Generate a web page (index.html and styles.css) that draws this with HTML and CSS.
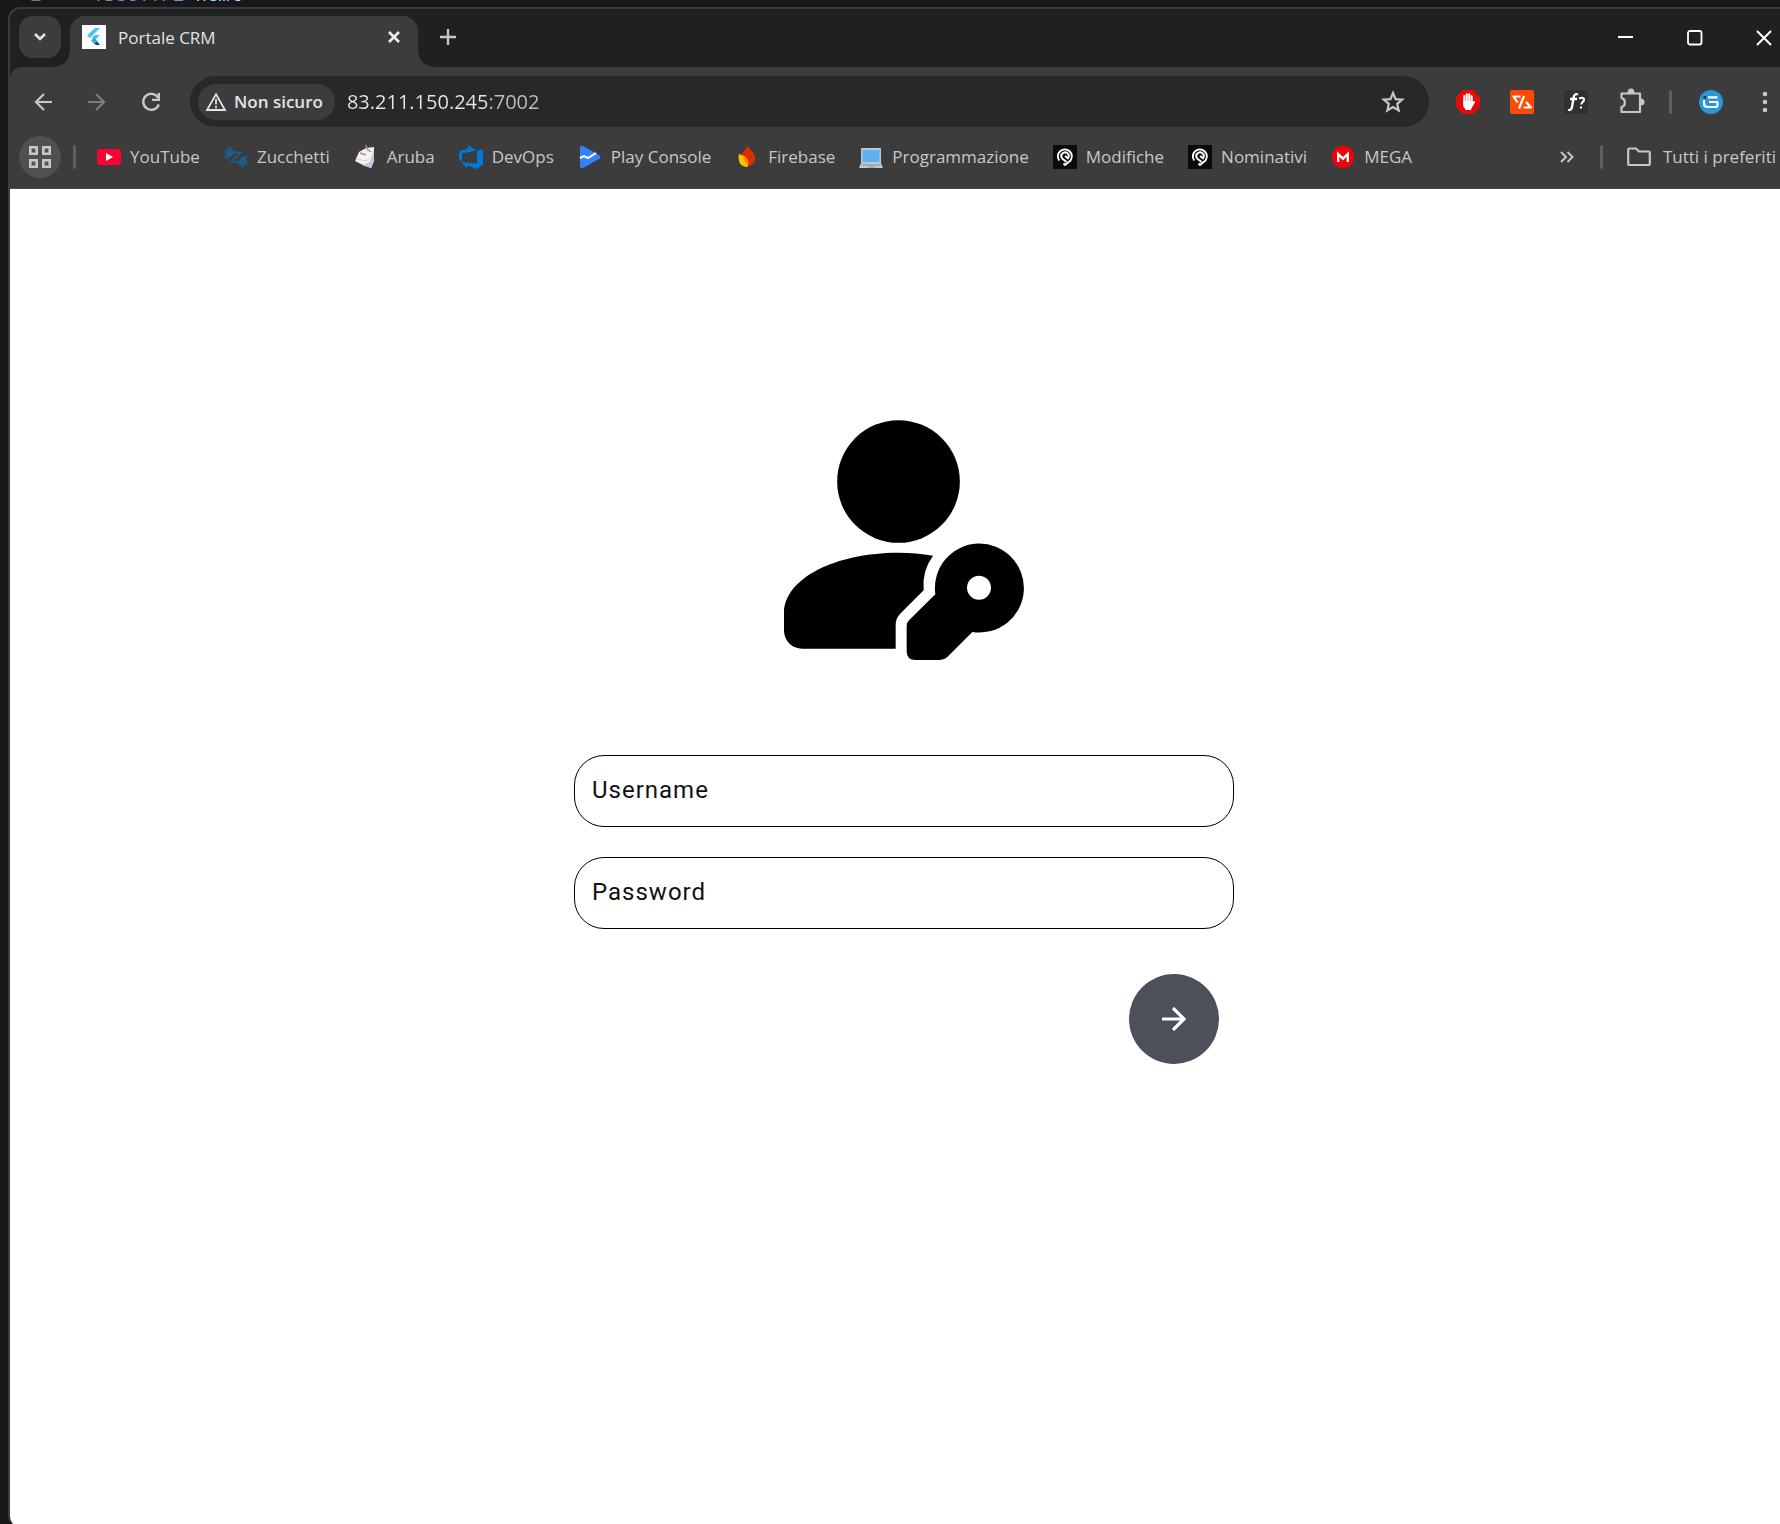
FILE: index.html
```html
<!DOCTYPE html>
<html lang="it">
<head>
<meta charset="utf-8">
<title>Portale CRM</title>
<link rel="stylesheet" href="styles.css">
</head>
<body>
<div class="editor"><span class="line-no">1</span><span class="code"><span class="punct">&lt;!</span><span class="keyword">DOCTYPE</span> <span class="attr">html</span><span class="punct">&gt;</span></span></div>
<div class="window">
  <header class="chrome">
    <div class="tabstrip">
      <button class="tab-search" aria-label="Cerca schede"><svg width="14" height="10" viewBox="0 0 14 10"><path d="M2 2l5 5 5-5" fill="none" stroke="#e3e3e3" stroke-width="2.6"/></svg></button>
      <div class="tab">
        <svg class="icon" viewBox="0 0 24 24"><path fill="#fff" d="M0 0h24v24H0z"/><path fill="#47c5fb" d="M13 3h5L8 13l-3-2.500z"/><path fill="#47c5fb" d="M13 10h5l-5 5-3-2.500z"/><path fill="#35a5ee" d="M9 15.500l3-3 3 3-3 3z"/><path fill="#0b4f9e" d="M12 18.500l3-2.500 3 4h-4z"/></svg>
        <span class="tab-title">Portale CRM</span>
        <button class="tab-close" aria-label="Chiudi scheda"><svg width="14" height="14" viewBox="0 0 14 14"><path d="M2 2l10 10M12 2L2 12" stroke="#eee" stroke-width="2.600"/></svg></button>
      </div>
      <button class="new-tab" aria-label="Nuova scheda"><svg width="16" height="16" viewBox="0 0 16 16"><path d="M8 0v16M0 8h16" stroke="#c7c7c7" stroke-width="2.400"/></svg></button>
      <div class="controls">
        <button class="control" aria-label="Riduci a icona"><svg width="16" height="16" viewBox="0 0 16 16"><path d="M0 7h15" stroke="#fff" stroke-width="2"/></svg></button>
        <button class="control" aria-label="Ingrandisci"><svg width="16" height="16" viewBox="0 0 16 16"><rect x="1" y="1" width="13.500" height="13.500" rx="2" fill="none" stroke="#fff" stroke-width="1.800"/></svg></button>
        <button class="control" aria-label="Chiudi"><svg width="16" height="16" viewBox="0 0 16 16"><path d="M1 1l14 14M15 1L1 15" stroke="#fff" stroke-width="2"/></svg></button>
      </div>
    </div>
    <div class="toolbar">
      <button class="tool" aria-label="Indietro"><svg width="20" height="20" viewBox="0 0 20 20"><path d="M19 10H3M11 2l-8 8 8 8" fill="none" stroke="#c7c7c7" stroke-width="2.200"/></svg></button>
      <button class="tool" aria-label="Avanti"><svg width="20" height="20" viewBox="0 0 20 20"><path d="M1 10h16M9 2l8 8-8 8" fill="none" stroke="#7c7c7c" stroke-width="2.200"/></svg></button>
      <button class="tool" aria-label="Ricarica"><svg width="20" height="20" viewBox="0 0 20 20"><path d="M17 5.500A8 8 0 1 0 17.800 12.500" fill="none" stroke="#c7c7c7" stroke-width="2.400"/><path d="M19 1v8h-8v-2.300h5.700V1z" fill="#c7c7c7"/></svg></button>
      <div class="omnibox">
        <button class="site-info"><svg width="22" height="20" viewBox="0 0 22 20"><path d="M11 2.200L20 18H2z" fill="none" stroke="#e3e3e3" stroke-width="1.800"/><path d="M11 7v5.500M11 14v2.200" stroke="#e3e3e3" stroke-width="1.800"/></svg>Non sicuro</button>
        <input class="address" type="text" aria-label="Indirizzo" value="83.211.150.245:7002">
        <button class="star" aria-label="Aggiungi ai preferiti"><svg width="24" height="24" viewBox="0 0 24 24"><path d="M12 3l2.600 6.100 6.600.6-5 4.300 1.500 6.500-5.700-3.400-5.700 3.400 1.500-6.500-5-4.300 6.600-.6z" fill="none" stroke="#c7c7c7" stroke-width="2.200"/></svg></button>
      </div>
      <button class="tool" aria-label="AdBlock"><svg class="icon" viewBox="0 0 24 24"><path fill="#e60b0b" d="M7 0h10l7 7v10l-7 7H7l-7-7V7z"/><path fill="none" stroke="#fff" stroke-width="2.100" stroke-linecap="round" d="M8.300 13V6M10.800 12V4.200M13.300 12V4.200M15.700 13V6.300M15 17l3-5"/><path fill="#fff" d="M7.200 11h9.600v4l-2 5h-5l-2.600-4z"/></svg></button>
      <button class="tool" aria-label="Estensione codice"><svg class="icon" viewBox="0 0 24 24"><rect width="24" height="24" rx="2" fill="#ff4a07"/><path fill="none" stroke="#fff" stroke-width="2.200" stroke-linejoin="round" d="M10.500 6.500H3.500l4 6M13.500 17.500h7.500l-5-5.500M14 6L9 18.500"/></svg></button>
      <button class="tool" aria-label="WhatFont"><svg class="icon" viewBox="0 0 24 24"><rect width="24" height="24" rx="3" fill="#303030"/><path fill="none" stroke="#fff" stroke-width="2.300" d="M14 4.500c-3-1-4 .5-4.500 3.500L8 17c-.5 3-2 3.500-4 2.700M6 9h7"/><path fill="none" stroke="#fff" stroke-width="2" d="M15.300 9c1-2 5-1.700 4.700 1-.3 2-2.500 2-2.800 4.500M17 16.500v2"/></svg></button>
      <button class="tool" aria-label="Estensioni"><svg width="30" height="30" viewBox="0 0 30 30"><path d="M6.500 6.500H25v18.500H6.500v-5c4.500-1 4.500-8 0-9z" fill="none" stroke="#c7c7c7" stroke-width="2.200" stroke-linejoin="round"/><path fill="#c7c7c7" d="M12.500 6a3.500 4.500 0 0 1 7 0zM25.500 11.500a4 3.500 0 0 1 0 7z"/></svg></button>
      <span class="divider"></span>
      <button class="tool" aria-label="Profilo"><svg class="icon" viewBox="0 0 24 24"><circle cx="12" cy="12" r="12" fill="#2b98d5"/><path fill="none" stroke="#fff" stroke-width="2.200" stroke-linejoin="round" d="M9 7.300h9.500M5 10v3.500q0 3.500 3.500 3.500h8q2 0 2-2v-3H10"/><circle cx="5.800" cy="7.300" r="1.500" fill="#19384c"/></svg></button>
      <button class="tool" aria-label="Menu"><svg width="6" height="22" viewBox="0 0 6 22"><g fill="#c7c7c7"><circle cx="3" cy="3" r="2.300"/><circle cx="3" cy="11" r="2.300"/><circle cx="3" cy="19" r="2.300"/></g></svg></button>
    </div>
    <nav class="bookmarks" aria-label="Preferiti">
      <button class="apps" aria-label="App"><svg width="22" height="22" viewBox="0 0 22 22"><path d="M1.300 1.300h6.400v6.400H1.300zM14.300 1.300h6.400v6.400h-6.400zM1.300 14.300h6.400v6.400H1.300zM14.300 14.300h6.400v6.400h-6.400z" fill="none" stroke="#c7c7c7" stroke-width="2.600"/></svg></button>
      <span class="divider"></span>
      <div class="links">
        <a class="link" href="#"><svg class="icon" viewBox="0 0 24 24"><rect y="4" width="24" height="16" rx="3" fill="#ff0033"/><path fill="#fff" d="M9 8l7 4-7 4z"/></svg>YouTube</a>
        <a class="link" href="#"><svg class="icon" viewBox="0 0 24 24"><path fill="#1b5c88" d="M0 4.500h4.500V.5L11 7l-6 6H0l2-4zM24 19.500h-4.500v4L13 17l6-6h5l-2 4z"/><path fill="none" stroke="#1b5c88" stroke-width="1.800" d="M9 7.300h8L7.500 16.700H16"/></svg>Zucchetti</a>
        <a class="link" href="#"><svg class="icon" viewBox="0 0 24 24"><path fill="#f2f2f8" d="M5 7l7-4 8-1v14l-3 7-8-3-8-4z"/><path fill="#c6c7df" d="M20 4v12l-3 7-9-3 8-3z"/><path fill="none" stroke="#b89268" stroke-width="1.500" d="M12 0l1 4 4 3M6 8l6 2"/><path stroke="#d0d0e0" fill="none" d="M2 14l10 2 7-6"/></svg>Aruba</a>
        <a class="link" href="#"><svg class="icon" viewBox="0 0 24 24"><path fill="#0078d7" d="M24 4.500v15l-6 4.500-10-3.500V24l-5.500-7 15.500 1.500V5.500zM17.500 5.400L9 0v3.500L2 5.600 0 8.300v6.500l3 1.200V8.500z"/></svg>DevOps</a>
        <a class="link" href="#"><svg class="icon" viewBox="0 0 24 24"><path fill="#3182ff" d="M2 3q0-3 3-2l16 9q3 2 0 4L5 23q-3 1-3-2z"/><path fill="none" stroke="#fff" stroke-width="2" d="M2 13l4-2 4 2 8-5"/></svg>Play Console</a>
        <a class="link" href="#"><svg class="icon" viewBox="0 0 24 24"><path fill="#dd2c00" d="M12 1c6 6 9 9 8 14a8.200 8.200 0 0 1-16 0c0-5 5-7 8-14z"/><path fill="#ffc400" d="M4 9c6 2 9 6 8.500 13A8 8 0 0 1 4 16q-1-4 0-7z"/><path fill="#ff9100" d="M8 10c5 3 7 8 4.500 12C11 17 8 15 8 10z"/></svg>Firebase</a>
        <a class="link" href="#"><svg class="icon" viewBox="0 0 24 24"><rect x="2" y="3" width="20" height="16" rx="1" fill="#b5c9d6"/><path fill="#5eb1ec" d="M3.500 5h17v12h-17z"/><path fill="#b9c8d2" d="M2 18h20l2 5H0z"/><path stroke="#82939d" d="M3 20h18M9 22h6"/></svg>Programmazione</a>
        <a class="link" href="#"><svg class="icon" viewBox="0 0 24 24"><path fill="#0a0b0c" d="M0 0h24v24H0z"/><path fill="none" stroke="#fff" stroke-width="1.900" d="M6.200 15.500A7 7 0 1 1 17.500 15.500L12 20l-1.500-1.500M13.500 17L9.200 13.500A3.700 3.700 0 1 1 15 13.300L12 11"/></svg>Modifiche</a>
        <a class="link" href="#"><svg class="icon" viewBox="0 0 24 24"><path fill="#0a0b0c" d="M0 0h24v24H0z"/><path fill="none" stroke="#fff" stroke-width="1.900" d="M6.200 15.500A7 7 0 1 1 17.500 15.500L12 20l-1.500-1.500M13.500 17L9.200 13.500A3.700 3.700 0 1 1 15 13.300L12 11"/></svg>Nominativi</a>
        <a class="link" href="#"><svg class="icon" viewBox="0 0 24 24"><circle cx="12" cy="12" r="11.200" fill="#f0000b"/><path fill="none" stroke="#fff" stroke-width="2.400" d="M7.200 17V9l4.800 4.700L16.800 9v8"/></svg>MEGA</a>
      </div>
      <button class="more" aria-label="Altri preferiti"><svg width="14" height="12" viewBox="0 0 14 12"><path d="M1 1l5 5-5 5M7.500 1l5 5-5 5" fill="none" stroke="#c7c7c7" stroke-width="2"/></svg></button>
      <span class="divider"></span>
      <a class="link all" href="#"><svg class="icon" viewBox="0 0 24 24"><path d="M1.200 19V4.500q0-1 1-1H9l3 3h9.800q1 0 1 1V19q0 1-1 1H2.200q-1 0-1-1z" fill="none" stroke="#c7c7c7" stroke-width="2.200"/></svg>Tutti i preferiti</a>
    </nav>
  </header>
  <main class="page">
    <form class="login">
      <svg class="avatar" viewBox="72 60 720 720" aria-hidden="true">
        <circle cx="415.500" cy="244.500" r="184"/>
        <path d="M72 640C72 534 228 458 415 458Q470 458 519 467Q485 514 491 571L422 640Q407 655 407 675V746H126A54 54 0 0 1 72 692z"/>
        <path fill-rule="evenodd" d="M526 583A133.500 133.500 0 1 1 637 696L562 771Q553 780 540 780H466Q440 780 440 754V678Q440 668 447 661zM693 563.500a36 36 0 1 0-72 0a36 36 0 1 0 72 0z"/>
      </svg>
      <label class="field">Username<input class="entry" type="text" name="username" autocomplete="username"></label>
      <label class="field">Password<input class="entry" type="password" name="password" autocomplete="current-password"></label>
      <button class="submit" type="submit" aria-label="Accedi"><svg width="24" height="24" viewBox="0 0 24 24"><path d="M0 12h22M11 1l11 11-11 11" fill="none" stroke="#fff" stroke-width="3.200"/></svg></button>
    </form>
  </main>
</div>
</body>
</html>
```
FILE: styles.css
```css
* { box-sizing: border-box; }

html { background: #181818; }

body {
  margin: 0;
  min-height: 100vh;
  overflow: hidden;
  display: flex;
  flex-direction: column;
  font-family: "Open Sans", "Noto Sans", sans-serif;
  font-size: 17px;
  color: #c7c7c7;
}

button {
  display: flex;
  align-items: center;
  justify-content: center;
  flex: none;
  padding: 0;
  border: 0;
  background: none;
  color: inherit;
  font: inherit;
}

svg { display: block; flex: none; }

.icon { width: 24px; height: 24px; }

/* Last code line of the editor behind the window */
.editor {
  display: flex;
  align-items: flex-end;
  gap: 40px;
  height: 7px;
  padding-left: 30px;
  font: 19px/22px "Liberation Mono", monospace;
  overflow: hidden;
}
.line-no { color: #6e7681; }
.punct { color: #808080; }
.keyword { color: #569cd6; }
.attr { color: #9cdcfe; }

/* The window runs past the right edge of the desktop */
.window {
  flex: 1;
  display: flex;
  flex-direction: column;
  margin: 0 -18px -2px 8px;
  border: solid #3c3c3c;
  border-width: 2px 0 0 2px;
  border-radius: 12px 0 0 10px;
  background: #1f2120;
  overflow: hidden;
}

.tabstrip {
  display: flex;
  align-items: flex-start;
  height: 58px;
  padding: 7px 0 0 9px;
}
.tab-search {
  width: 42px;
  height: 42px;
  border-radius: 14px;
  background: #3c3c3c;
}
.tab {
  position: relative;
  display: flex;
  align-items: center;
  width: 348px;
  height: 51px;
  margin-left: 9px;
  padding: 0 12px 8px;
  gap: 12px;
  border-radius: 15px 15px 0 0;
  background: #3c3c3c;
  color: #e3e3e3;
}
.tab .icon { margin-top: -2px; }
.tab::before,
.tab::after {
  content: "";
  position: absolute;
  bottom: 0;
  width: 15px;
  height: 15px;
}
.tab::before {
  right: 100%;
  background: radial-gradient(circle at 0 0, transparent 14px, #3c3c3c 15px);
}
.tab::after {
  left: 100%;
  background: radial-gradient(circle at 100% 0, transparent 14px, #3c3c3c 15px);
}
.tab-title { flex: 1; }
.tab-close { width: 24px; height: 24px; margin-top: -2px; }
.new-tab { width: 42px; height: 42px; margin-left: 9px; }
.controls {
  display: flex;
  margin-left: auto;
}
.control { width: 69px; height: 44px; }

.toolbar {
  display: flex;
  align-items: center;
  height: 69px;
  padding: 0 6px;
  border-top-left-radius: 12px;
  background: #3c3c3c;
}
.tool { width: 54px; height: 51px; }
.divider {
  flex: none;
  width: 3px;
  height: 24px;
  margin: 0 12px;
  border-radius: 2px;
  background: #5e5e5e;
}
.omnibox {
  flex: 1;
  display: flex;
  align-items: center;
  height: 51px;
  margin: 0 12px;
  padding: 0 24px 0 8px;
  border-radius: 26px;
  background: #282828;
}
.site-info {
  height: 36px;
  padding: 0 12px 0 7px;
  gap: 7px;
  border-radius: 18px;
  background: #3c3c3c;
  color: #e3e3e3;
  font-weight: 600;
}
.address {
  flex: 1;
  min-width: 0;
  margin-left: 12px;
  padding: 0;
  border: 0;
  outline: 0;
  font: 20px "Open Sans", "Noto Sans", sans-serif;
  color: transparent;
  background: linear-gradient(90deg, #e8e8e8 142px, #c0c0c0 142px);
  background-clip: text;
}

.bookmarks {
  display: flex;
  align-items: center;
  height: 53px;
  padding: 0 22px 11px 9px;
  border-bottom: 1px solid #4a4a4a;
  background: #3c3c3c;
}
.apps {
  width: 42px;
  height: 42px;
  border-radius: 50%;
  background: #505050;
}
.links {
  display: flex;
  flex: 1;
  gap: 24px;
  margin-left: 9px;
}
.link {
  display: flex;
  align-items: center;
  gap: 9px;
  color: inherit;
  text-decoration: none;
  white-space: nowrap;
}
.more { width: 42px; height: 42px; }
.all { gap: 12px; margin-left: 12px; }

.page {
  flex: 1;
  padding: 231px 24px 24px;
  background: #fff;
}
.login {
  display: flex;
  flex-direction: column;
  gap: 30px;
  max-width: 660px;
  margin: 0 auto;
}
.avatar {
  width: 240px;
  height: 240px;
  margin: 0 auto 65px;
  fill: #000;
}
.field {
  display: flex;
  align-items: center;
  gap: 12px;
  height: 72px;
  padding: 0 17px 3px;
  border: 1px solid #000;
  border-radius: 30px;
  color: #111;
  font: 24px Roboto, sans-serif;
  letter-spacing: 1px;
}
.entry {
  flex: 1;
  min-width: 0;
  padding: 0;
  border: 0;
  outline: 0;
  background: none;
  color: inherit;
  font: inherit;
}
.submit {
  align-self: flex-end;
  width: 90px;
  height: 90px;
  margin: 15px 15px 0 0;
  border-radius: 50%;
  background: #4c505b;
}
```
